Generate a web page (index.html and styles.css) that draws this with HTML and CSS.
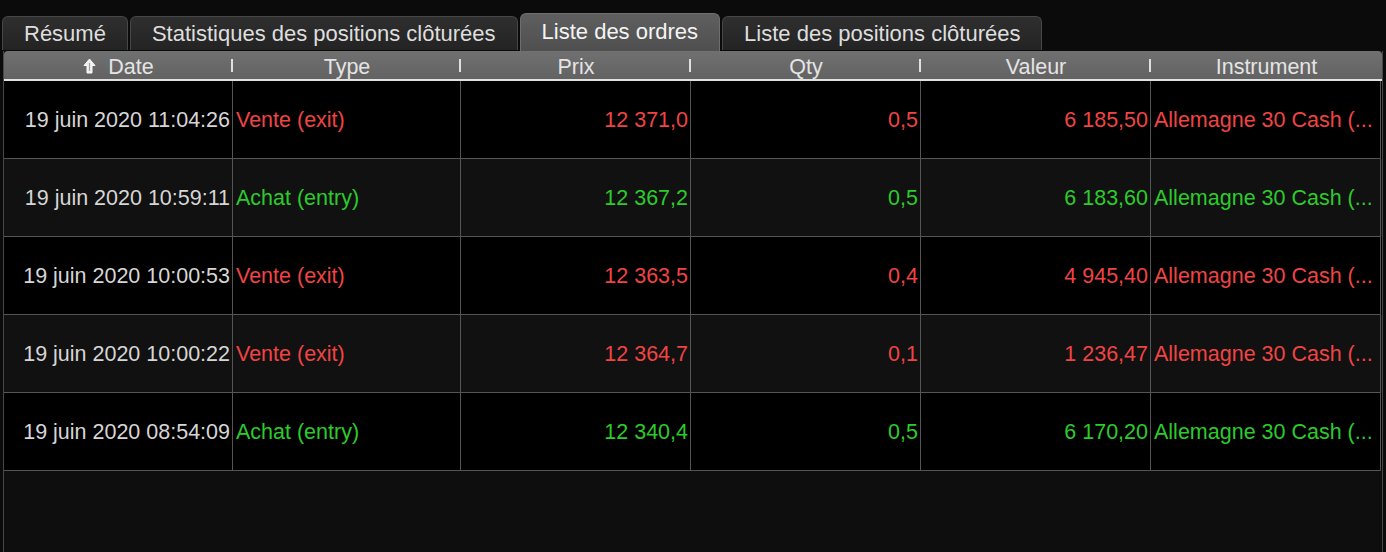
FILE: index.html
```html
<!DOCTYPE html>
<html lang="fr">
<head>
<meta charset="utf-8">
<title>Liste des ordres</title>
<link rel="stylesheet" href="styles.css">
</head>
<body>
<div class="tabs">
  <div class="tab">Résumé</div>
  <div class="tab">Statistiques des positions clôturées</div>
  <div class="tab active">Liste des ordres</div>
  <div class="tab">Liste des positions clôturées</div>
</div>
<div class="panel">
  <div class="head">
    <div class="hcell sep"><svg class="sort" width="13" height="16" viewBox="0 0 13 16"><path d="M6.5 1 L12 7.5 L9 7.5 L9 15 L4 15 L4 7.5 L1 7.5 Z" fill="#f0f0f0" stroke="#f8f8f8" stroke-width="1"/><path d="M6.5 5 L6.5 13" stroke="#a0a0a0" stroke-width="1.2"/></svg>Date</div>
    <div class="hcell sep">Type</div>
    <div class="hcell sep">Prix</div>
    <div class="hcell sep">Qty</div>
    <div class="hcell sep">Valeur</div>
    <div class="hcell">Instrument</div>
  </div>
  <div class="row red">
    <div class="cell date">19 juin 2020 11:04:26</div>
    <div class="cell left">Vente (exit)</div>
    <div class="cell num">12 371,0</div>
    <div class="cell num">0,5</div>
    <div class="cell num">6 185,50</div>
    <div class="cell left inst">Allemagne 30 Cash (...</div>
  </div>
  <div class="row green alt">
    <div class="cell date">19 juin 2020 10:59:11</div>
    <div class="cell left">Achat (entry)</div>
    <div class="cell num">12 367,2</div>
    <div class="cell num">0,5</div>
    <div class="cell num">6 183,60</div>
    <div class="cell left inst">Allemagne 30 Cash (...</div>
  </div>
  <div class="row red">
    <div class="cell date">19 juin 2020 10:00:53</div>
    <div class="cell left">Vente (exit)</div>
    <div class="cell num">12 363,5</div>
    <div class="cell num">0,4</div>
    <div class="cell num">4 945,40</div>
    <div class="cell left inst">Allemagne 30 Cash (...</div>
  </div>
  <div class="row red alt">
    <div class="cell date">19 juin 2020 10:00:22</div>
    <div class="cell left">Vente (exit)</div>
    <div class="cell num">12 364,7</div>
    <div class="cell num">0,1</div>
    <div class="cell num">1 236,47</div>
    <div class="cell left inst">Allemagne 30 Cash (...</div>
  </div>
  <div class="row green">
    <div class="cell date">19 juin 2020 08:54:09</div>
    <div class="cell left">Achat (entry)</div>
    <div class="cell num">12 340,4</div>
    <div class="cell num">0,5</div>
    <div class="cell num">6 170,20</div>
    <div class="cell left inst">Allemagne 30 Cash (...</div>
  </div>
</div>
</body>
</html>
```
FILE: styles.css
```css
html, body {
  margin: 0;
  padding: 0;
  background: #0b0b0b;
  height: 100%;
  overflow: hidden;
}
body {
  font-family: "Liberation Sans", Arial, Helvetica, sans-serif;
  font-size: 21.5px;
  color: #dcdcdc;
}
.tabs {
  display: flex;
  align-items: flex-end;
  gap: 2px;
  height: 51px;
  padding-left: 2px;
  box-sizing: border-box;
}
.tab {
  height: 34px;
  margin-bottom: 1px;
  box-sizing: border-box;
  padding: 0 21px;
  display: flex;
  align-items: center;
  justify-content: center;
  background: linear-gradient(#2f2f2f, #232323);
  border: 1px solid #474747;
  border-bottom: none;
  border-radius: 6px 6px 0 0;
  color: #dedede;
  white-space: nowrap;
  font-size: 22px;
}
.tab.active {
  height: 38px;
  margin-bottom: 0;
  padding-bottom: 2px;
  background: linear-gradient(#5f5f5f, #4f4f4f);
  border-color: #6e6e6e;
  color: #f4f4f4;
}
.panel {
  margin-left: 3px;
  width: 1380px;
  box-sizing: border-box;
  height: 501px;
  border-left: 1px solid #474747;
  border-right: 1px solid #474747;
  background: #0e0e0e;
}
.head {
  display: grid;
  grid-template-columns: 229px 228px 230px 230px 230px 1fr;
  height: 30px;
  box-sizing: border-box;
  background: linear-gradient(#707070, #626262);
  border-bottom: 2px solid #e2e2e2;
  border-radius: 4px 4px 0 0;
}
.hcell {
  position: relative;
  display: flex;
  align-items: center;
  justify-content: center;
  color: #e4e4e4;
  line-height: 28px;
  padding-top: 2px;
}
.hcell.sep::after {
  content: "";
  position: absolute;
  right: 0;
  top: 8px;
  width: 2px;
  height: 13px;
  background: #e0e0e0;
}
.sort {
  margin-right: 12px;
  margin-top: -3px;
}
.row {
  display: grid;
  grid-template-columns: 229px 228px 230px 230px 230px 230px;
  height: 78px;
  background: #000;
}
.row:first-of-type { height: 77px; }
.row.alt { background: #111; }
.cell {
  display: flex;
  align-items: center;
  border-right: 1px solid #555;
  border-bottom: 1px solid #555;
  white-space: nowrap;
  overflow: hidden;
  padding-top: 2px;
}
.cell.date {
  justify-content: flex-end;
  padding-right: 2px;
  color: #d6d6d6;
}
.cell.left {
  padding-left: 3px;
}
.cell.inst { padding-left: 3px; }
.cell.num {
  justify-content: flex-end;
  padding-right: 2px;
}
.red .cell:not(.date) { color: #f04444; }
.green .cell:not(.date) { color: #2ccb2c; }
```
